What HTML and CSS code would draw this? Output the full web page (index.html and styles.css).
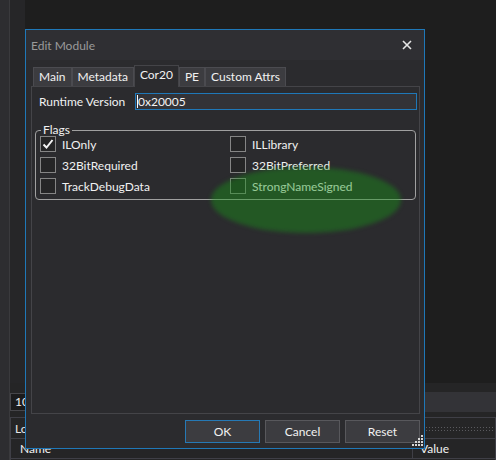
FILE: index.html
```html
<!DOCTYPE html>
<html>
<head>
<meta charset="utf-8">
<title>Edit Module</title>
<link rel="stylesheet" href="styles.css">
</head>
<body>
<div class="app">
  <div class="rail"></div>
  <div class="workspace">
    <div class="editor"><div class="gutter"></div><div class="code"></div></div>
    <div class="toolwin">
      <div class="toolbar"><div class="numbox">10</div><div class="searchbox"></div></div>
      <div class="locals">
        <div class="locals-head"><span class="locals-title">Locals</span><span class="grip-line"></span></div>
        <div class="cols"><span class="col-name">Name</span><span class="col-value">Value</span></div>
      </div>
    </div>
  </div>
</div>

<div class="dialog">
  <div class="titlebar">
    <span class="title">Edit Module</span>
    <svg class="close" viewBox="0 0 10 10" width="10" height="10"><path d="M1 1 L9 9 M9 1 L1 9" stroke="#e6e6e6" stroke-width="1.6" fill="none"/></svg>
  </div>
  <div class="dlg-body">
    <div class="tabs">
      <div class="tab">Main</div>
      <div class="tab">Metadata</div>
      <div class="tab active">Cor20</div>
      <div class="tab">PE</div>
      <div class="tab">Custom Attrs</div>
    </div>
    <div class="panel">
      <div class="field-row">
        <span class="field-label">Runtime Version</span>
        <div class="textbox"><span class="caret"></span>0x20005</div>
      </div>
      <fieldset class="flags">
        <legend>Flags</legend>
        <div class="check-grid">
          <label class="check"><span class="box"><svg viewBox="0 0 14 14" width="14" height="14"><path d="M2.5 7.5 L5.5 10.5 L11.5 3" stroke="#f4f4f4" stroke-width="2" fill="none"/></svg></span>ILOnly</label>
          <label class="check"><span class="box"></span>ILLibrary</label>
          <label class="check"><span class="box"></span>32BitRequired</label>
          <label class="check"><span class="box"></span>32BitPreferred</label>
          <label class="check"><span class="box"></span>TrackDebugData</label>
          <label class="check"><span class="box"></span>StrongNameSigned</label>
        </div>
      </fieldset>
    </div>
    <div class="buttons">
      <button class="btn default">OK</button>
      <button class="btn">Cancel</button>
      <button class="btn">Reset</button>
    </div>
  </div>
  <svg class="grip" viewBox="0 0 11 11" width="11" height="11">
    <g fill="#d8d8d8">
      <rect x="9" y="0" width="2" height="2"/>
      <rect x="6" y="3" width="2" height="2"/><rect x="9" y="3" width="2" height="2"/>
      <rect x="3" y="6" width="2" height="2"/><rect x="6" y="6" width="2" height="2"/><rect x="9" y="6" width="2" height="2"/>
      <rect x="0" y="9" width="2" height="2"/><rect x="3" y="9" width="2" height="2"/><rect x="6" y="9" width="2" height="2"/><rect x="9" y="9" width="2" height="2"/>
    </g>
  </svg>
</div>

<div class="highlight"></div>
</body>
</html>
```

FILE: styles.css
```css
* { box-sizing: border-box; }
html, body { margin: 0; padding: 0; }
body {
  width: 496px;
  height: 460px;
  overflow: hidden;
  position: relative;
  background: #1e1e1e;
  font-family: Lato, "Liberation Sans", sans-serif;
  font-size: 12px;
  color: #f1f1f1;
}

/* background application */
.app { display: flex; height: 460px; }
.rail { width: 10px; background: #2d2d30; border-right: 1px solid #3a3a3d; }
.workspace { flex: 1; display: flex; flex-direction: column; }
.editor { height: 383px; display: flex; }
.gutter { width: 15px; background: #262628; }
.code { flex: 1; background: #1e1e1e; }
.toolwin { flex: 1; background: #252526; display: flex; flex-direction: column; }
.toolbar { height: 34px; display: flex; align-items: flex-start; gap: 4px; }
.numbox {
  width: 32px; height: 18px; margin-top: 10px;
  border: 1px solid #46464a; background: #1b1b1c;
  padding-left: 4px; line-height: 16px; color: #f1f1f1;
}
.searchbox { flex: 1; height: 20px; margin-top: 9px; background: #333337; }
.locals { flex: 1; border: 1px solid #3f3f46; border-bottom: none; display: flex; flex-direction: column; }
.locals-head { height: 20px; display: flex; align-items: center; padding-left: 4px; }
.locals-title { color: #e8e8e8; }
.grip-line {
  flex: 1; height: 5px; margin: 0 0 0 12px;
  background-image: radial-gradient(circle, #5a5a5e 0.8px, transparent 1px);
  background-size: 3px 3px;
}
.cols { height: 21px; display: flex; align-items: center; border-top: 1px solid #3f3f46; border-bottom: 1px solid #3f3f46; }
.col-name { width: 402px; padding-left: 9px; border-right: 1px solid #3f3f46; height: 100%; display: flex; align-items: center; }
.col-value { padding-left: 7px; }

/* dialog window */
.dialog {
  position: absolute; left: 25px; top: 29px;
  width: 400px; height: 420px;
  border: 1px solid #1f78b8;
  background: #2b2b2e;
  display: flex; flex-direction: column;
}
.titlebar {
  height: 30px; background: #2f2f33;
  display: flex; align-items: center; justify-content: space-between;
  padding: 0 12px 0 5px;
}
.title { color: #9a9a9a; }
.close { display: block; }
.dlg-body { flex: 1; display: flex; flex-direction: column; padding: 5px 4px 5px 5px; }
.tabs { display: flex; align-items: flex-end; height: 21px; padding-left: 2px; position: relative; z-index: 1; }
.tab {
  height: 19px; line-height: 17px; padding: 0 5px;
  background: #3c3c40; border: 1px solid #4b4b50; border-bottom: none;
  color: #f1f1f1; white-space: nowrap;
}
.tab.active {
  height: 22px; margin-bottom: -1px; line-height: 18px;
  background: #2b2b2e; border-color: #444448;
}
.panel { flex: 1; border: 1px solid #444448; padding: 6px 2px 0 3px; }
.field-row { display: grid; grid-template-columns: 96px 1fr; align-items: center; padding-left: 4px; }
.textbox {
  height: 17px; border: 1px solid #1f78b8; background: #333337;
  padding-left: 1px; display: flex; align-items: center; color: #f4f4f4;
}
.caret { width: 1px; height: 13px; background: #ffffff; margin-right: 0; }
.flags {
  margin: 14px 1px 0 0; padding: 0 4px 5px 4px;
  border: 1px solid #a0a0a0; border-radius: 4px; min-width: 0;
}
.flags legend { padding: 0 2px; margin-left: 1px; line-height: 12px; }
.check-grid { display: grid; grid-template-columns: 190px 1fr; row-gap: 5px; }
.check { display: flex; align-items: center; gap: 6px; height: 16px; white-space: nowrap; }
.box {
  width: 16px; height: 16px; border: 1px solid #858585; background: #252526;
  display: flex; align-items: center; justify-content: center;
}
.box svg { display: block; }
.buttons { display: flex; justify-content: flex-end; gap: 5px; margin-top: 6px; }
.btn {
  width: 75px; height: 23px; padding: 0;
  background: #3c3c40; border: 1px solid #58585c;
  color: #f1f1f1; font: inherit;
}
.btn.default { border-color: #2679b5; }
.grip { position: absolute; right: 1px; bottom: 2px; display: block; }

/* annotation overlay */
.highlight {
  position: absolute; left: 211px; top: 167px;
  width: 190px; height: 66px; border-radius: 50%;
  background: rgba(24, 150, 24, 0.42);
  filter: blur(2px);
  pointer-events: none;
}
```
